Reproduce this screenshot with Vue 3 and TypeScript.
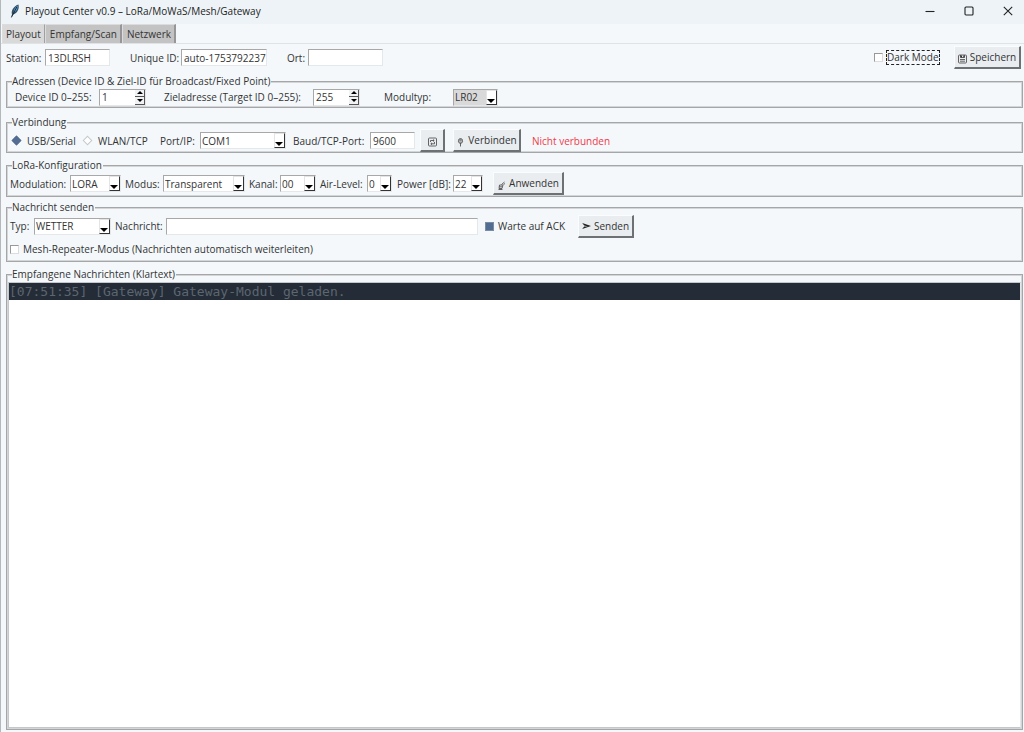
<script setup lang="ts">
import { reactive, ref } from 'vue'

const tabs = ['Playout', 'Empfang/Scan', 'Netzwerk']
const activeTab = ref('Playout')

const form = reactive({
  station: '13DLRSH',
  uniqueId: 'auto-1753792237',
  ort: '',
  darkMode: false,
  deviceId: 1,
  targetId: 255,
  modul: 'LR02',
  link: 'usb',
  port: 'COM1',
  baud: '9600',
  modulation: 'LORA',
  modus: 'Transparent',
  kanal: '00',
  airLevel: '0',
  power: '22',
  typ: 'WETTER',
  nachricht: '',
  ack: true,
  repeater: false,
})

const log = ref(['[07:51:35] [Gateway] Gateway-Modul geladen.'])

function step(key: 'deviceId' | 'targetId', delta: number) {
  form[key] = Math.min(255, Math.max(0, form[key] + delta))
}
</script>

<template>
  <div class="window">
    <header class="titlebar">
      <svg class="feather" viewBox="0 0 10 14" aria-hidden="true">
        <path d="M1.2 13.6 2 10.2C.9 7.200 3 2.400 8.400.4 9.400 3.800 8.200 8.600 3.200 10.600Z" fill="#2f4f66" />
        <path d="M3.600 8.800C3.600 5.600 5.400 2.800 7.800 1.600 7.800 4.800 6.600 7.400 3.600 8.800Z" fill="#5b9bd0" />
        <path d="M1.400 13.400 6.800 3" stroke="#16232e" stroke-width=".9" fill="none" />
      </svg>
      <h1>Playout Center v0.9 – LoRa/MoWaS/Mesh/Gateway</h1>
      <div class="caption">
        <button type="button" aria-label="Minimieren">
          <svg viewBox="0 0 10 10"><path d="M.5 5.500h9" /></svg>
        </button>
        <button type="button" aria-label="Maximieren">
          <svg viewBox="0 0 10 10"><rect x="1" y="1" width="8" height="8" rx="1" /></svg>
        </button>
        <button type="button" aria-label="Schließen">
          <svg viewBox="0 0 10 10"><path d="M.8.8l8.400 8.400M9.200.8.8 9.200" /></svg>
        </button>
      </div>
    </header>

    <nav class="tabs">
      <button
        v-for="tab in tabs"
        :key="tab"
        type="button"
        :class="{ active: tab === activeTab }"
        @click="activeTab = tab"
      >{{ tab }}</button>
    </nav>

    <main>
      <div class="row station">
        <label for="station">Station:</label>
        <input id="station" v-model="form.station" class="entry" type="text">
        <label for="uid">Unique ID:</label>
        <input id="uid" v-model="form.uniqueId" class="entry" type="text">
        <label for="ort">Ort:</label>
        <input id="ort" v-model="form.ort" class="entry" type="text">
        <label class="check dark"><input v-model="form.darkMode" type="checkbox"><span class="focus">Dark Mode</span></label>
        <button type="button" class="btn">
          <svg class="ico" viewBox="0 0 9 10" aria-hidden="true">
            <rect x=".5" y="1" width="8" height="8" rx="1" />
            <path d="M2.500 1v2.500h4V1M2 5.500h5M2 7.200h5" />
            <path d="M2.500 1.500h1.500v2H2.500zM5.300 1.500h1.200v2H5.300z" fill="#333" stroke="none" />
          </svg>Speichern
        </button>
      </div>

      <fieldset class="adressen">
        <legend>Adressen (Device ID &amp; Ziel-ID für Broadcast/Fixed Point)</legend>
        <div class="row">
          <label for="device">Device ID 0–255:</label>
          <span class="spin">
            <input id="device" v-model.number="form.deviceId" type="number" min="0" max="255">
            <span class="arrows">
              <button type="button" aria-label="Device ID erhöhen" @click="step('deviceId', 1)"><i class="up"></i></button>
              <button type="button" aria-label="Device ID verringern" @click="step('deviceId', -1)"><i class="down"></i></button>
            </span>
          </span>
          <label for="target">Zieladresse (Target ID 0–255):</label>
          <span class="spin">
            <input id="target" v-model.number="form.targetId" type="number" min="0" max="255">
            <span class="arrows">
              <button type="button" aria-label="Zieladresse erhöhen" @click="step('targetId', 1)"><i class="up"></i></button>
              <button type="button" aria-label="Zieladresse verringern" @click="step('targetId', -1)"><i class="down"></i></button>
            </span>
          </span>
          <label for="modul">Modultyp:</label>
          <span class="combo readonly"><select id="modul" v-model="form.modul"><option>LR02</option></select></span>
        </div>
      </fieldset>

      <fieldset class="verbindung">
        <legend>Verbindung</legend>
        <div class="row">
          <label class="radio"><input v-model="form.link" type="radio" name="link" value="usb">USB/Serial</label>
          <label class="radio"><input v-model="form.link" type="radio" name="link" value="wlan">WLAN/TCP</label>
          <label for="port">Port/IP:</label>
          <span class="combo"><select id="port" v-model="form.port"><option>COM1</option></select></span>
          <label for="baud">Baud/TCP-Port:</label>
          <input id="baud" v-model="form.baud" class="entry" type="text">
          <button type="button" class="btn refresh" aria-label="Ports aktualisieren">
            <svg class="ico" viewBox="0 0 9 10" aria-hidden="true">
              <rect x=".5" y="1" width="8" height="8" rx="1" />
              <path d="M2.500 5V3.500h3.500M5 2.500l1.200 1L5 4.500M6.500 5v1.800H3M4 5.800l-1.200 1 1.200 1" />
            </svg>
          </button>
          <button type="button" class="btn connect">
            <svg class="ico" viewBox="0 0 9 10" aria-hidden="true">
              <path d="M2.500 3.500c0-2.600 4-2.600 4 0v1.300L5.500 6.200h-2l-1-1.400z" fill="#b4b4b4" />
              <path d="M4.500 6v3.500M3.500 3h2" />
            </svg>Verbinden
          </button>
          <span class="status">Nicht verbunden</span>
        </div>
      </fieldset>

      <fieldset class="lora">
        <legend>LoRa-Konfiguration</legend>
        <div class="row">
          <label for="modulation">Modulation:</label>
          <span class="combo"><select id="modulation" v-model="form.modulation"><option>LORA</option></select></span>
          <label for="modus">Modus:</label>
          <span class="combo"><select id="modus" v-model="form.modus"><option>Transparent</option></select></span>
          <label for="kanal">Kanal:</label>
          <span class="combo"><select id="kanal" v-model="form.kanal"><option>00</option></select></span>
          <label for="air">Air-Level:</label>
          <span class="combo"><select id="air" v-model="form.airLevel"><option>0</option></select></span>
          <label for="power">Power [dB]:</label>
          <span class="combo"><select id="power" v-model="form.power"><option>22</option></select></span>
          <button type="button" class="btn">
            <svg class="ico" viewBox="0 0 9 10" aria-hidden="true">
              <path d="M1.500 9.500h4M2.500 5h3.500L5 8.500H2zM2.200 6.800h3M4.500 4.500 7.500 2M6.500 4.500 8 3.500" />
            </svg>Anwenden
          </button>
        </div>
      </fieldset>

      <fieldset class="senden">
        <legend>Nachricht senden</legend>
        <div class="row">
          <label for="typ">Typ:</label>
          <span class="combo"><select id="typ" v-model="form.typ"><option>WETTER</option></select></span>
          <label for="msg">Nachricht:</label>
          <input id="msg" v-model="form.nachricht" class="entry" type="text">
          <label class="check"><input v-model="form.ack" type="checkbox">Warte auf ACK</label>
          <button type="button" class="btn send">
            <svg class="ico solid" viewBox="0 0 9 10" aria-hidden="true">
              <path d="M.2 2 9 5 .2 8 2.200 5.400H6L2.200 4.600Z" />
            </svg>Senden
          </button>
        </div>
        <label class="check repeater"><input v-model="form.repeater" type="checkbox">Mesh-Repeater-Modus (Nachrichten automatisch weiterleiten)</label>
      </fieldset>

      <fieldset class="empfang">
        <legend>Empfangene Nachrichten (Klartext)</legend>
        <div class="log" role="log">
          <p v-for="line in log" :key="line">{{ line }}</p>
        </div>
      </fieldset>
    </main>
  </div>
</template>

<style>
body {
  margin: 0;
  background: #f4f8fb;
}
</style>

<style scoped>
.window {
  display: flex;
  flex-direction: column;
  min-height: 100vh;
  box-sizing: border-box;
  border-left: 1px solid #b4b8bb;
  background: #f4f8fb;
  color: #333;
  font: 10px/14px "Open Sans", "Noto Sans", sans-serif;
  white-space: nowrap;
}

.window *,
.window *::before,
.window *::after {
  box-sizing: border-box;
}

button,
input,
select {
  margin: 0;
  font: inherit;
  color: inherit;
}

.titlebar {
  display: flex;
  align-items: center;
  height: 24px;
  padding: 0 0 2px 9px;
  background: #edf3f6;
}

.feather {
  width: 10px;
  height: 14px;
  margin-right: 5px;
}

h1 {
  margin: 0;
  font-size: 10px;
  font-weight: 400;
  color: #1d1d1d;
}

.caption {
  display: flex;
  margin-left: auto;
}

.caption button {
  display: grid;
  place-items: center;
  width: 39px;
  height: 20px;
  padding: 0;
  border: 0;
  background: none;
}

.caption button:last-child {
  width: 36px;
  padding-left: 4px;
}

.caption svg {
  width: 10px;
  height: 10px;
  fill: none;
  stroke: #222;
  stroke-width: 1.1;
}

.tabs {
  display: flex;
  height: 20px;
  padding: 0 1px;
  border-bottom: 1px solid #dfe3e6;
}

.tabs button {
  padding: 0 3px 0 4px;
  border: 0;
  border-top: 1px solid #dcdcdc;
  border-left: 1px solid #dcdcdc;
  border-right: 2px solid #969696;
  background: #c3c3c3;
}

.tabs button.active {
  padding-left: 3px;
  background: #d9d9d9;
  border-right: 1px solid #a0a0a0;
}

main {
  display: flex;
  flex: 1;
  flex-direction: column;
  padding: 2px 1px 3px 5px;
}

.row {
  display: grid;
  align-items: center;
}

.station {
  grid-template-columns: 39px 65px 20px 51px 86px 20px 21px 75px 1fr 80px 67px;
  height: 21px;
  margin: 0 2px 8px 0;
}

.station > :nth-child(3) { grid-column: 4; }
.station > :nth-child(5) { grid-column: 7; }
.station > :nth-child(7) { grid-column: 10; }

fieldset {
  min-width: 0;
  margin: 0;
  padding: 1px;
  border: 1px solid #a4a6a8;
  box-shadow: inset 0 0 0 1px #d3d5d6;
}

legend {
  margin-left: 4px;
  padding: 0 1px 0 0;
  background: #f4f8fb;
  line-height: 12px;
}

.adressen { margin-bottom: 8px; }
.verbindung { margin-bottom: 6px; }
.lora { margin-bottom: 4px; }
.senden { margin-bottom: 6px; }

.adressen .row {
  grid-template-columns: 84px 65px 149px 71px 69px 45px;
  height: 18px;
  padding-left: 7px;
}

.verbindung .row {
  grid-template-columns: 71px 77px 40px 93px 77px 50px 33px 79px 1fr;
  height: 21px;
  margin-bottom: 1px;
  padding-left: 4px;
}

.lora .row {
  grid-template-columns: 60px 55px 38px 86px 31px 40px 47px 30px 56px 40px 71px;
  height: 23px;
  padding-left: 2px;
}

.senden .row {
  grid-template-columns: 24px 81px 51px 319px 93px 56px;
  height: 24px;
  padding-left: 2px;
}

.repeater {
  height: 22px;
  padding-left: 2px;
}

.entry {
  width: 100%;
  height: 17px;
  padding: 0 0 0 2px;
  border: 1px solid #e4e8ea;
  border-top-color: #a8a8a8;
  border-left-color: #a8a8a8;
  border-radius: 0;
  background: #fff;
}

.verbindung .entry { width: 45px; }
.senden .entry { width: 312px; }

.spin {
  display: flex;
  width: 47px;
  height: 17px;
  border: 1px solid #e4e8ea;
  border-top-color: #a8a8a8;
  border-left-color: #a8a8a8;
  background: #fff;
}

.spin input {
  flex: 1;
  min-width: 0;
  padding: 0 2px;
  border: 0;
  background: none;
  appearance: textfield;
}

.spin input::-webkit-inner-spin-button {
  appearance: none;
}

.arrows {
  display: flex;
  flex-direction: column;
  width: 10px;
}

.arrows button {
  display: grid;
  flex: 1;
  place-items: center;
  padding: 0;
  border: 0;
  border-right: 1px solid #555;
  border-bottom: 1px solid #555;
  background: #f0f2f3;
}

.arrows i {
  border: 3px solid transparent;
}

.arrows .up {
  border-top: 0;
  border-bottom-color: #000;
}

.arrows .down {
  border-bottom: 0;
  border-top-color: #000;
}

.combo {
  position: relative;
  display: block;
  height: 17px;
  border: 1px solid #e4e8ea;
  border-top-color: #a8a8a8;
  border-left-color: #a8a8a8;
  background: #fff;
}

.combo::after {
  content: "";
  position: absolute;
  top: 0;
  right: 0;
  width: 11px;
  height: 100%;
  border: 1px solid #e4e4e4;
  border-right-color: #333;
  border-bottom-color: #333;
  background: #fff;
  pointer-events: none;
}

.combo::before {
  content: "";
  position: absolute;
  z-index: 1;
  right: 2px;
  bottom: 2px;
  border: 4px solid transparent;
  border-top-color: #000;
  border-bottom: 0;
  pointer-events: none;
}

.combo select {
  display: block;
  width: 100%;
  height: 15px;
  padding: 0 0 0 1px;
  border: 0;
  border-radius: 0;
  background: none;
  appearance: none;
}

.combo.readonly { background: #d9d9d9; }
.verbindung .combo { width: 86px; }
.lora .combo,
.senden .combo { margin-right: 4px; }
.lora .combo:nth-of-type(4) { margin-right: 5px; }
.lora .combo:nth-of-type(5) { margin-right: 10px; }

.check,
.radio {
  display: flex;
  align-items: center;
  gap: 4px;
}

.radio { gap: 6px; }

.check input {
  width: 9px;
  height: 9px;
  border: 1px solid #dcdcdc;
  border-top-color: #999;
  border-left-color: #999;
  background: #fff;
  appearance: none;
}

.check input:checked {
  border-color: #7b8ba3;
  background: #536d92;
}

.radio input {
  width: 7px;
  height: 7px;
  margin: 0 1px;
  border: 1px solid #c4c8cb;
  background: #fff;
  transform: rotate(45deg);
  appearance: none;
}

.radio input:checked {
  border-color: #536d92;
  background: #536d92;
}

.focus {
  outline: 1px dashed #222;
  line-height: 13px;
}

.btn {
  display: flex;
  align-items: center;
  justify-content: center;
  gap: 3px;
  height: 23px;
  padding: 0;
  border: 1px solid #fafcfd;
  border-right: 2px solid #6e7173;
  border-bottom: 2px solid #6e7173;
  border-radius: 0;
  background: #e9edf0;
}

.refresh { width: 25px; }
.connect { width: 68px; }
.status { color: #f0384a; }

.ico {
  width: 9px;
  height: 10px;
  margin-top: 3px;
  fill: none;
  stroke: #555;
  stroke-width: 0.9;
}

.ico.solid {
  margin-top: 0;
  fill: #222;
  stroke: none;
}

.empfang {
  flex: 1;
}

.log {
  min-height: calc(100vh - 286px);
  margin-top: 1px;
  border: 1px solid #c4c8cb;
  border-right-color: #e4e8ea;
  background: #fff;
}

.log p {
  height: 17px;
  margin: 0;
  background: #242c37;
  color: #5c6670;
  font: 13px/18px "DejaVu Sans Mono", "Liberation Mono", monospace;
}
</style>
